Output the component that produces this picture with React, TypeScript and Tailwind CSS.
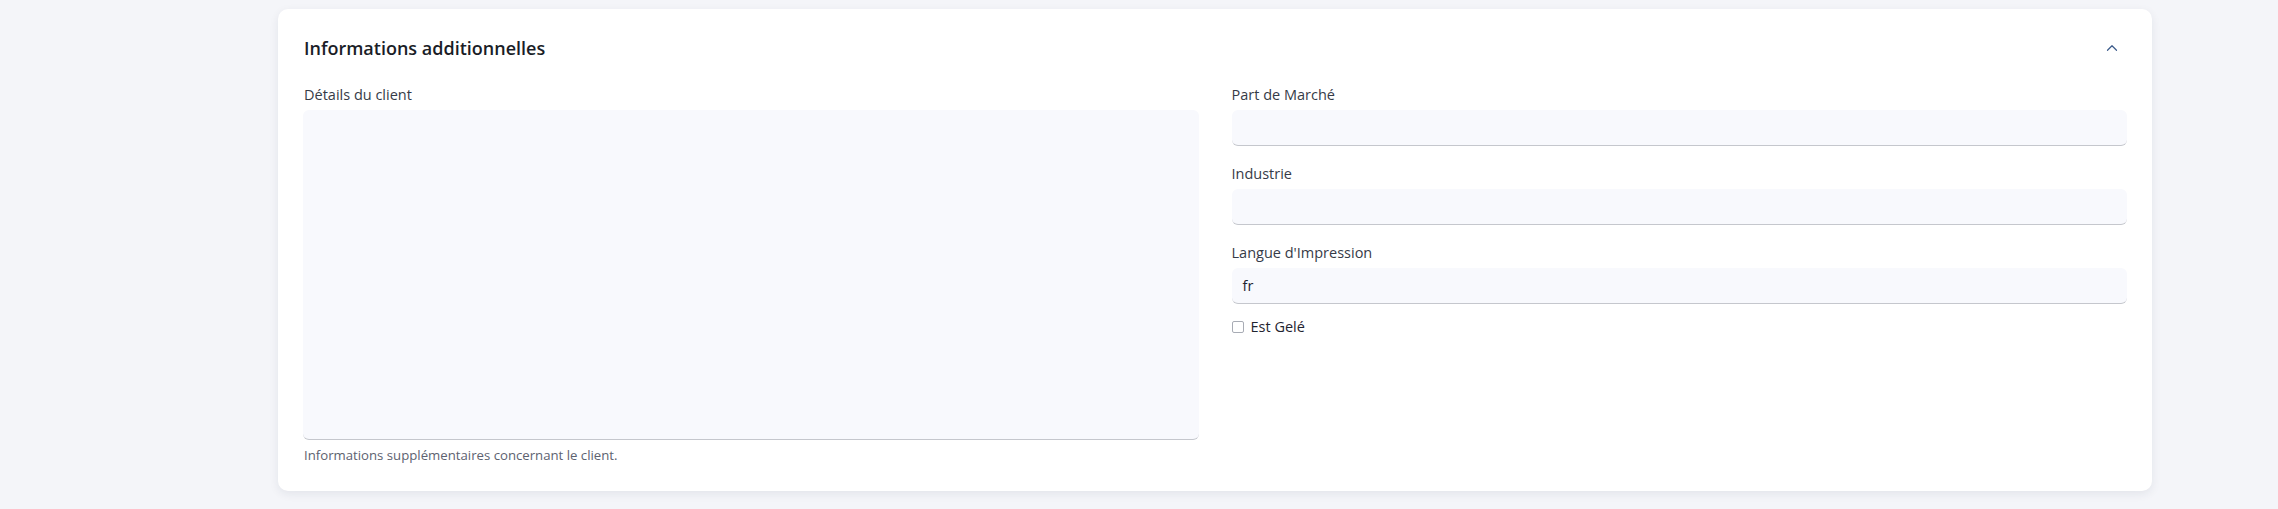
import { ChevronUp } from "lucide-react";

const font = { fontFamily: "'Open Sans', 'Noto Sans', sans-serif" };

const Field = ({ label, value }: { label: string; value?: string }) => (
  <div className="flex flex-col">
    <label className="text-[14.5px] leading-[20px] text-[#363b47] mb-[5px]">{label}</label>
    <div className="h-[36px] rounded-md bg-[#f8f9fd] border-b border-[#c5c7cd] flex items-center px-[11px] text-[14.5px] text-[#1f2430]">
      {value}
    </div>
  </div>
);

export default function App() {
  return (
    <div className="h-[509px] overflow-hidden bg-[#f4f5f9] pt-[9px] pl-[278px] pr-[126px]" style={font}>
      <div className="rounded-[10px] bg-white shadow-[0_3px_10px_rgba(30,40,60,0.08)] px-[25px] pt-[25px] pb-[28px]">
        {/* Header */}
        <div className="flex items-center justify-between h-[28px]">
          <h2 className="text-[18px] font-semibold text-[#1a1d27] pl-[1px]">Informations additionnelles</h2>
          <button className="mr-[6px] text-[#3b5b8a]">
            <ChevronUp size={18} strokeWidth={1.6} />
          </button>
        </div>

        <div className="grid grid-cols-2 gap-[33px] mt-[23px]">
          {/* Left */}
          <div className="flex flex-col">
            <label className="text-[14.5px] leading-[20px] text-[#363b47] mb-[5px] pl-[1px]">Détails du client</label>
            <div className="h-[330px] rounded-md bg-[#f8f9fd] border-b border-[#c5c7cd]" />
            <p className="text-[13.2px] leading-[16px] text-[#5d6270] mt-[7px] pl-[1px]">
              Informations supplémentaires concernant le client.
            </p>
          </div>

          {/* Right */}
          <div className="flex flex-col gap-[18px]">
            <Field label="Part de Marché" />
            <Field label="Industrie" />
            <Field label="Langue d'Impression" value="fr" />
            <div className="flex items-center gap-[7px] -mt-[5px]">
              <span className="w-[12px] h-[12px] border border-[#a8acb5] rounded-[2px] bg-white" />
              <span className="text-[14.5px] leading-[20px] text-[#1f2430]">Est Gelé</span>
            </div>
          </div>
        </div>
      </div>
    </div>
  );
}
